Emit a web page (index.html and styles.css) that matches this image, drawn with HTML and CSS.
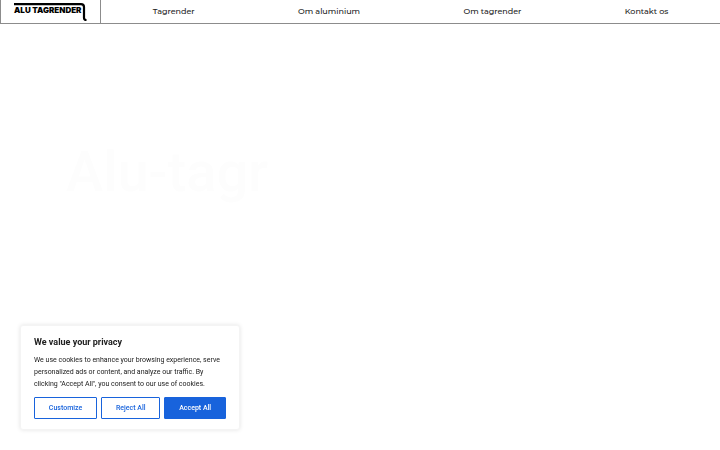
FILE: index.html
```
<!DOCTYPE html>
<html lang="da">
<head>
  <meta charset="UTF-8">
  <meta name="viewport" content="width=device-width, initial-scale=1.0">
  <title>Alu Tagrender</title>
  <link rel="stylesheet" href="styles.css">
</head>
<body>
  <header class="header">
    <a class="logo" href="#" aria-label="Alu Tagrender">
      <svg class="logo-image" width="74" height="20" viewBox="0 0 74 20">
        <path d="M1 2.200H68Q71 2.200 71 5V16Q71 18 73.500 18" fill="none" stroke="#000" stroke-width="2.200"/>
        <text class="logo-text" x="1" y="11">ALU TAGRENDER</text>
      </svg>
    </a>
    <nav class="menu">
      <a class="menu-link" href="#">Tagrender</a>
      <a class="menu-link" href="#">Om aluminium</a>
      <a class="menu-link" href="#">Om tagrender</a>
      <a class="menu-link" href="#">Kontakt os</a>
    </nav>
  </header>

  <main class="hero">
    <h1 class="hero-title">Alu-tagr</h1>
  </main>

  <section class="consent" aria-labelledby="consent-title">
    <h2 class="consent-title" id="consent-title">We value your privacy</h2>
    <p class="consent-text">We use cookies to enhance your browsing experience, serve personalized ads or content, and analyze our traffic. By clicking "Accept All", you consent to our use of cookies.</p>
    <div class="consent-buttons">
      <button class="button" type="button">Customize</button>
      <button class="button" type="button">Reject All</button>
      <button class="button button-accept" type="button">Accept All</button>
    </div>
  </section>
</body>
</html>
```

FILE: styles.css
```
:root {
  --primary-color: #1863dc;
  --line-color: #8c8c8c;
  --text-color: #212121;
}

* {
  box-sizing: border-box;
}

body {
  margin: 0;
  background-color: #fff;
  color: var(--text-color);
  font-family: Roboto, sans-serif;
}

.header {
  display: flex;
  height: 24px;
  border-bottom: 1px solid var(--line-color);
}

.logo {
  display: flex;
  padding: 2px 13px 0 12px;
  border-left: 1px solid var(--line-color);
  border-right: 1px solid var(--line-color);
}

.logo-image {
  display: block;
}

.logo-text {
  font-family: Inter, sans-serif;
  font-size: 8px;
  font-weight: 900;
}

.menu {
  flex: 1;
  display: flex;
  align-items: center;
  justify-content: space-around;
  padding-bottom: 2px;
}

.menu-link {
  color: #222;
  font-family: Montserrat, Inter, sans-serif;
  font-size: 8px;
  font-weight: 500;
  text-decoration: none;
}

.hero {
  padding: 112px 66px;
}

.hero-title {
  margin: 0;
  color: #fdfdfd;
  font-size: 56px;
  font-weight: 500;
  line-height: 72px;
}

.consent {
  position: fixed;
  left: 20px;
  bottom: 20px;
  width: 220px;
  padding: 10px 13px;
  background-color: #fff;
  border: 1px solid #f4f4f4;
  border-radius: 3px;
  box-shadow: 0 0 4px #e4e4e4;
}

.consent-title {
  margin: 0 0 6px;
  font-size: 9px;
  font-weight: 700;
  line-height: 12px;
}

.consent-text {
  margin: 0 0 7px;
  font-size: 7px;
  line-height: 12px;
}

.consent-buttons {
  display: flex;
  gap: 4px;
}

.button {
  flex: 1 1 auto;
  height: 22px;
  padding: 0;
  background-color: #fff;
  border: 1px solid var(--primary-color);
  border-radius: 1px;
  color: var(--primary-color);
  font-family: inherit;
  font-size: 7px;
  font-weight: 500;
  cursor: pointer;
}

.button-accept {
  background-color: var(--primary-color);
  color: #fff;
}
```
